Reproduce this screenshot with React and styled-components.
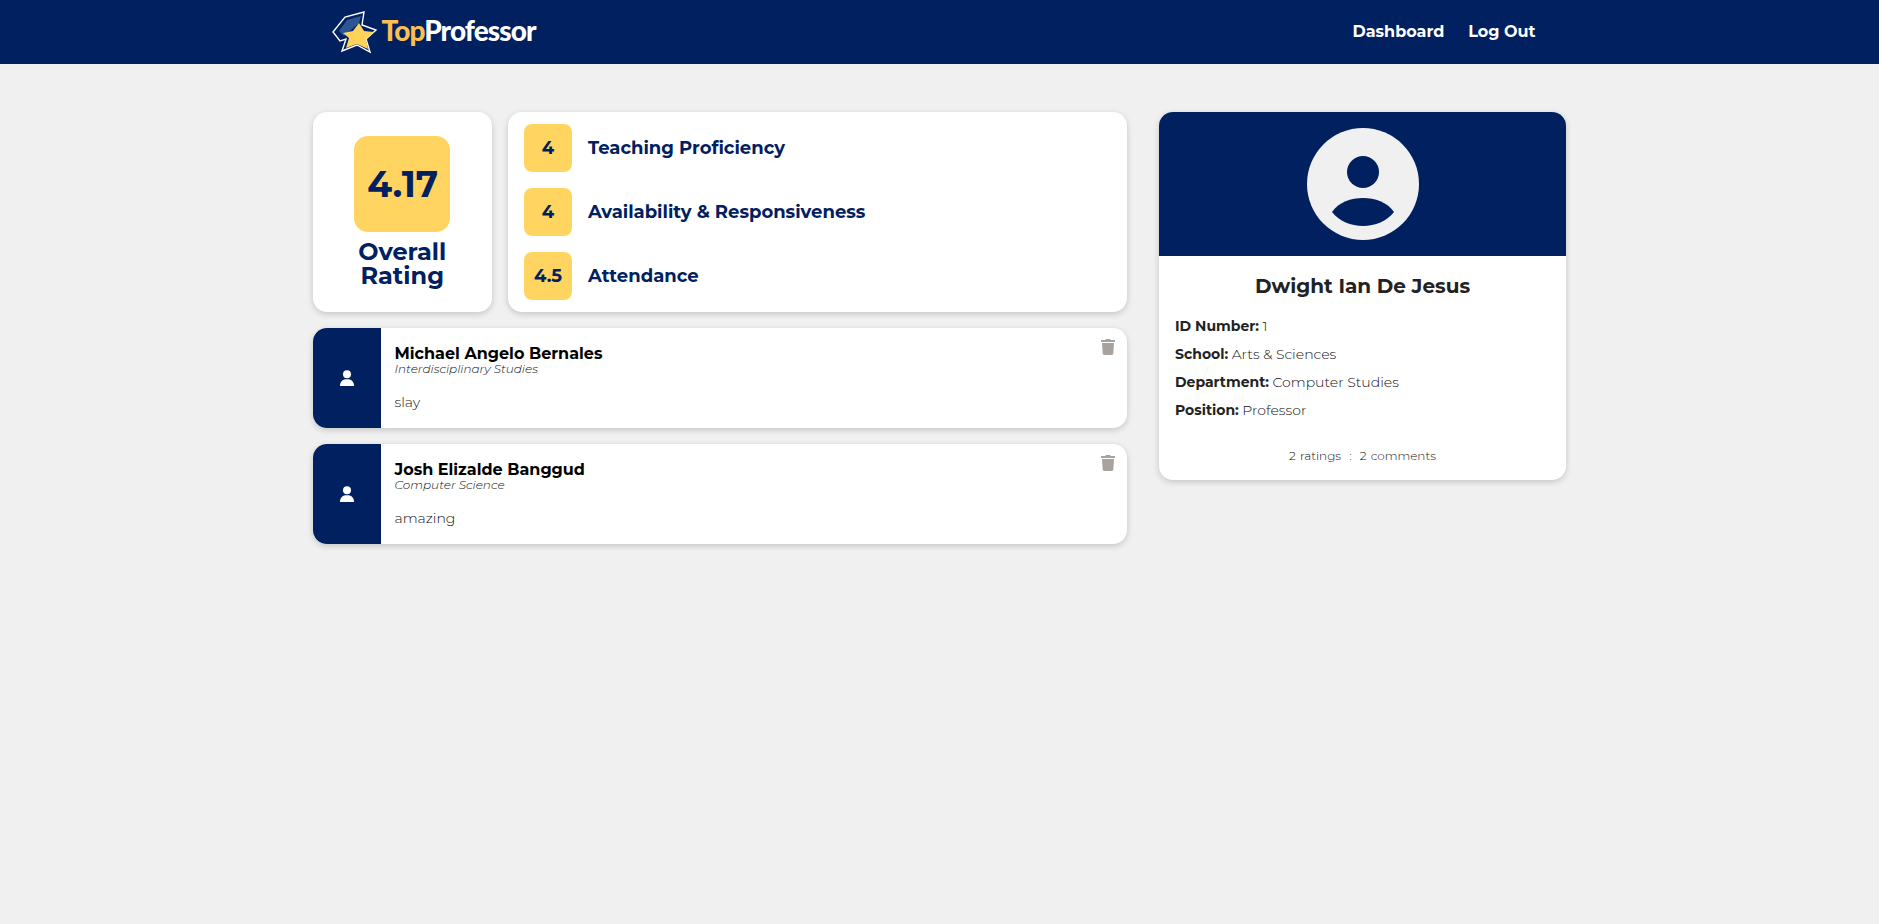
import styled, { createGlobalStyle } from "styled-components";
import { FaTrash } from "react-icons/fa";

const navy = "#00205f";
const yellow = "#ffd460";
const pageBg = "#f0f0f0";
const lightText = "#111";
const cardShadow = "0 2px 6px rgba(0, 0, 0, 0.18)";

const GlobalStyle = createGlobalStyle`
  * {
    box-sizing: border-box;
  }
  html, body {
    margin: 0;
    padding: 0;
    background: ${pageBg};
    font-family: "Montserrat", "Inter", "Noto Sans", sans-serif;
  }
`;

const Page = styled.div`
  min-height: 924px;
  background: ${pageBg};
`;

const Header = styled.header`
  height: 64px;
  background: ${navy};
`;

const HeaderInner = styled.div`
  width: 1254px;
  height: 100%;
  margin: 0 auto;
  padding: 0 31px 0 16px;
  display: flex;
  align-items: center;
  justify-content: space-between;
`;

const Logo = styled.div`
  display: flex;
  align-items: center;
  gap: 1px;
`;

const LogoText = styled.span`
  margin-bottom: 4px;
  font-family: "Lato", "Liberation Sans", sans-serif;
  font-size: 28px;
  font-weight: 900;
  letter-spacing: -0.9px;
  color: #fff;
`;

const LogoAccent = styled.span`
  color: #fdc050;
`;

const Nav = styled.nav`
  display: flex;
  gap: 24px;
  padding-bottom: 2px;
`;

const NavLink = styled.a`
  font-size: 16px;
  font-weight: 700;
  color: #fff;
  text-decoration: none;
`;

const Main = styled.main`
  width: 1254px;
  margin: 0 auto;
  padding-top: 48px;
  display: grid;
  grid-template-columns: 814.5px 407px;
  column-gap: 32px;
  align-items: start;
`;

const LeftColumn = styled.div`
  display: flex;
  flex-direction: column;
  gap: 16px;
`;

const RatingsRow = styled.div`
  display: flex;
  gap: 16px;
`;

const Card = styled.div`
  background: #fff;
  border-radius: 14px;
  box-shadow: ${cardShadow};
`;

const OverallCard = styled(Card)`
  width: 179.5px;
  height: 200px;
  padding-top: 24px;
  display: flex;
  flex-direction: column;
  align-items: center;
`;

const OverallScore = styled.div`
  width: 96px;
  height: 96px;
  margin-right: 1px;
  padding-left: 2px;
  border-radius: 14px;
  background: ${yellow};
  color: ${navy};
  font-size: 36px;
  font-weight: 700;
  display: flex;
  align-items: center;
  justify-content: center;
`;

const OverallLabel = styled.div`
  margin-top: 8px;
  font-size: 24px;
  line-height: 24px;
  font-weight: 700;
  color: ${navy};
  text-align: center;
`;

const CategoryCard = styled(Card)`
  flex: 1;
  height: 200px;
  padding: 12px 16px;
  display: flex;
  flex-direction: column;
  gap: 16px;
`;

const CategoryRow = styled.div`
  display: flex;
  align-items: center;
  gap: 16px;
`;

const CategoryScore = styled.div`
  width: 48px;
  height: 48px;
  border-radius: 8px;
  background: ${yellow};
  color: ${navy};
  font-size: 18px;
  font-weight: 700;
  display: flex;
  align-items: center;
  justify-content: center;
`;

const CategoryName = styled.div`
  font-size: 18px;
  font-weight: 700;
  color: ${navy};
`;

const CommentCard = styled(Card)`
  position: relative;
  height: 100px;
  display: flex;
  overflow: hidden;
`;

const CommentBand = styled.div`
  width: 68px;
  background: ${navy};
  display: flex;
  align-items: center;
  justify-content: center;
`;

const CommentBody = styled.div`
  padding: 18px 14px 0;
`;

const CommentName = styled.div`
  font-size: 16px;
  line-height: 16px;
  font-weight: 700;
  color: #000;
`;

const CommentCourse = styled.div`
  font-size: 12px;
  line-height: 14px;
  font-style: italic;
  font-weight: 300;
  color: ${lightText};
`;

const CommentText = styled.div`
  margin-top: 16px;
  font-size: 14px;
  line-height: 20px;
  font-weight: 300;
  color: ${lightText};
`;

const DeleteButton = styled.button`
  position: absolute;
  top: 11px;
  right: 11px;
  padding: 0;
  border: none;
  background: none;
  color: #a8a29e;
  font-size: 16px;
  line-height: 0;
  cursor: pointer;
`;

const ProfileCard = styled(Card)`
  height: 368px;
  overflow: hidden;
`;

const ProfileTop = styled.div`
  height: 144px;
  background: ${navy};
  display: flex;
  align-items: center;
  justify-content: center;
`;

const ProfileBody = styled.div`
  padding: 18px 16px 0;
`;

const ProfileName = styled.h2`
  margin: 0 0 14px;
  font-size: 20px;
  line-height: 24px;
  font-weight: 700;
  color: #222;
  text-align: center;
`;

const InfoRow = styled.div`
  height: 28px;
  font-size: 14px;
  line-height: 28px;
  font-weight: 300;
  color: ${lightText};
`;

const InfoLabel = styled.b`
  font-weight: 700;
  color: #222;
`;

const ProfileStats = styled.div`
  margin-top: 24px;
  font-size: 12px;
  line-height: 16px;
  font-weight: 300;
  word-spacing: 1px;
  color: ${lightText};
  text-align: center;
  white-space: pre;
`;

const StarLogo = () => (
  <svg width="52" height="48" viewBox="0 0 52 48">
    <path
      d="M4 24 L16 9 L35 4 L33 17 L47 22 L37 31 L41 44 L28 37 L13 43 L17 31 L11 33 Z"
      fill="none"
      stroke="#fff"
      strokeWidth="1.4"
      strokeLinejoin="miter"
    />
    <path d="M10 23 L18 12 L32 8 L30 15 L22 22 L15 28 Z" fill="#2f5597" />
    <path d="M30 15 L35 23 L45 24 L37 31 L39 41 L28 36 L17 40 L20 30 L14 25 L24 23 Z" fill="#ffd25a" />
  </svg>
);

const UserSmall = () => (
  <svg width="16" height="16" viewBox="0 0 16 16" fill="#fff">
    <circle cx="8" cy="4.2" r="4" />
    <path d="M1 16 C1 11 4 9.2 8 9.2 C12 9.2 15 11 15 16 Z" />
  </svg>
);

const UserLarge = () => (
  <svg width="112" height="112" viewBox="0 0 112 112">
    <circle cx="56" cy="56" r="56" fill={pageBg} />
    <circle cx="56" cy="44" r="16" fill={navy} />
    <path d="M25 84 C32 74 44 70 56 70 C68 70 80 74 87 84 C80 93 68 98 56 98 C44 98 32 93 25 84 Z" fill={navy} />
  </svg>
);

const categories = [
  { score: "4", name: "Teaching Proficiency" },
  { score: "4", name: "Availability & Responsiveness" },
  { score: "4.5", name: "Attendance" },
];

const comments = [
  { name: "Michael Angelo Bernales", course: "Interdisciplinary Studies", text: "slay" },
  { name: "Josh Elizalde Banggud", course: "Computer Science", text: "amazing" },
];

const info = [
  { label: "ID Number:", value: "1" },
  { label: "School:", value: "Arts & Sciences" },
  { label: "Department:", value: "Computer Studies" },
  { label: "Position:", value: "Professor" },
];

export default function App() {
  return (
    <Page>
      <GlobalStyle />
      <Header>
        <HeaderInner>
          <Logo>
            <StarLogo />
            <LogoText>
              <LogoAccent>Top</LogoAccent>Professor
            </LogoText>
          </Logo>
          <Nav>
            <NavLink href="#">Dashboard</NavLink>
            <NavLink href="#">Log Out</NavLink>
          </Nav>
        </HeaderInner>
      </Header>
      <Main>
        <LeftColumn>
          <RatingsRow>
            <OverallCard>
              <OverallScore>4.17</OverallScore>
              <OverallLabel>
                Overall
                <br />
                Rating
              </OverallLabel>
            </OverallCard>
            <CategoryCard>
              {categories.map((c) => (
                <CategoryRow key={c.name}>
                  <CategoryScore>{c.score}</CategoryScore>
                  <CategoryName>{c.name}</CategoryName>
                </CategoryRow>
              ))}
            </CategoryCard>
          </RatingsRow>
          {comments.map((c) => (
            <CommentCard key={c.name}>
              <CommentBand>
                <UserSmall />
              </CommentBand>
              <CommentBody>
                <CommentName>{c.name}</CommentName>
                <CommentCourse>{c.course}</CommentCourse>
                <CommentText>{c.text}</CommentText>
              </CommentBody>
              <DeleteButton aria-label="Delete comment">
                <FaTrash />
              </DeleteButton>
            </CommentCard>
          ))}
        </LeftColumn>
        <ProfileCard>
          <ProfileTop>
            <UserLarge />
          </ProfileTop>
          <ProfileBody>
            <ProfileName>Dwight Ian De Jesus</ProfileName>
            {info.map((row) => (
              <InfoRow key={row.label}>
                <InfoLabel>{row.label}</InfoLabel> {row.value}
              </InfoRow>
            ))}
            <ProfileStats>2 ratings  :  2 comments</ProfileStats>
          </ProfileBody>
        </ProfileCard>
      </Main>
    </Page>
  );
}
